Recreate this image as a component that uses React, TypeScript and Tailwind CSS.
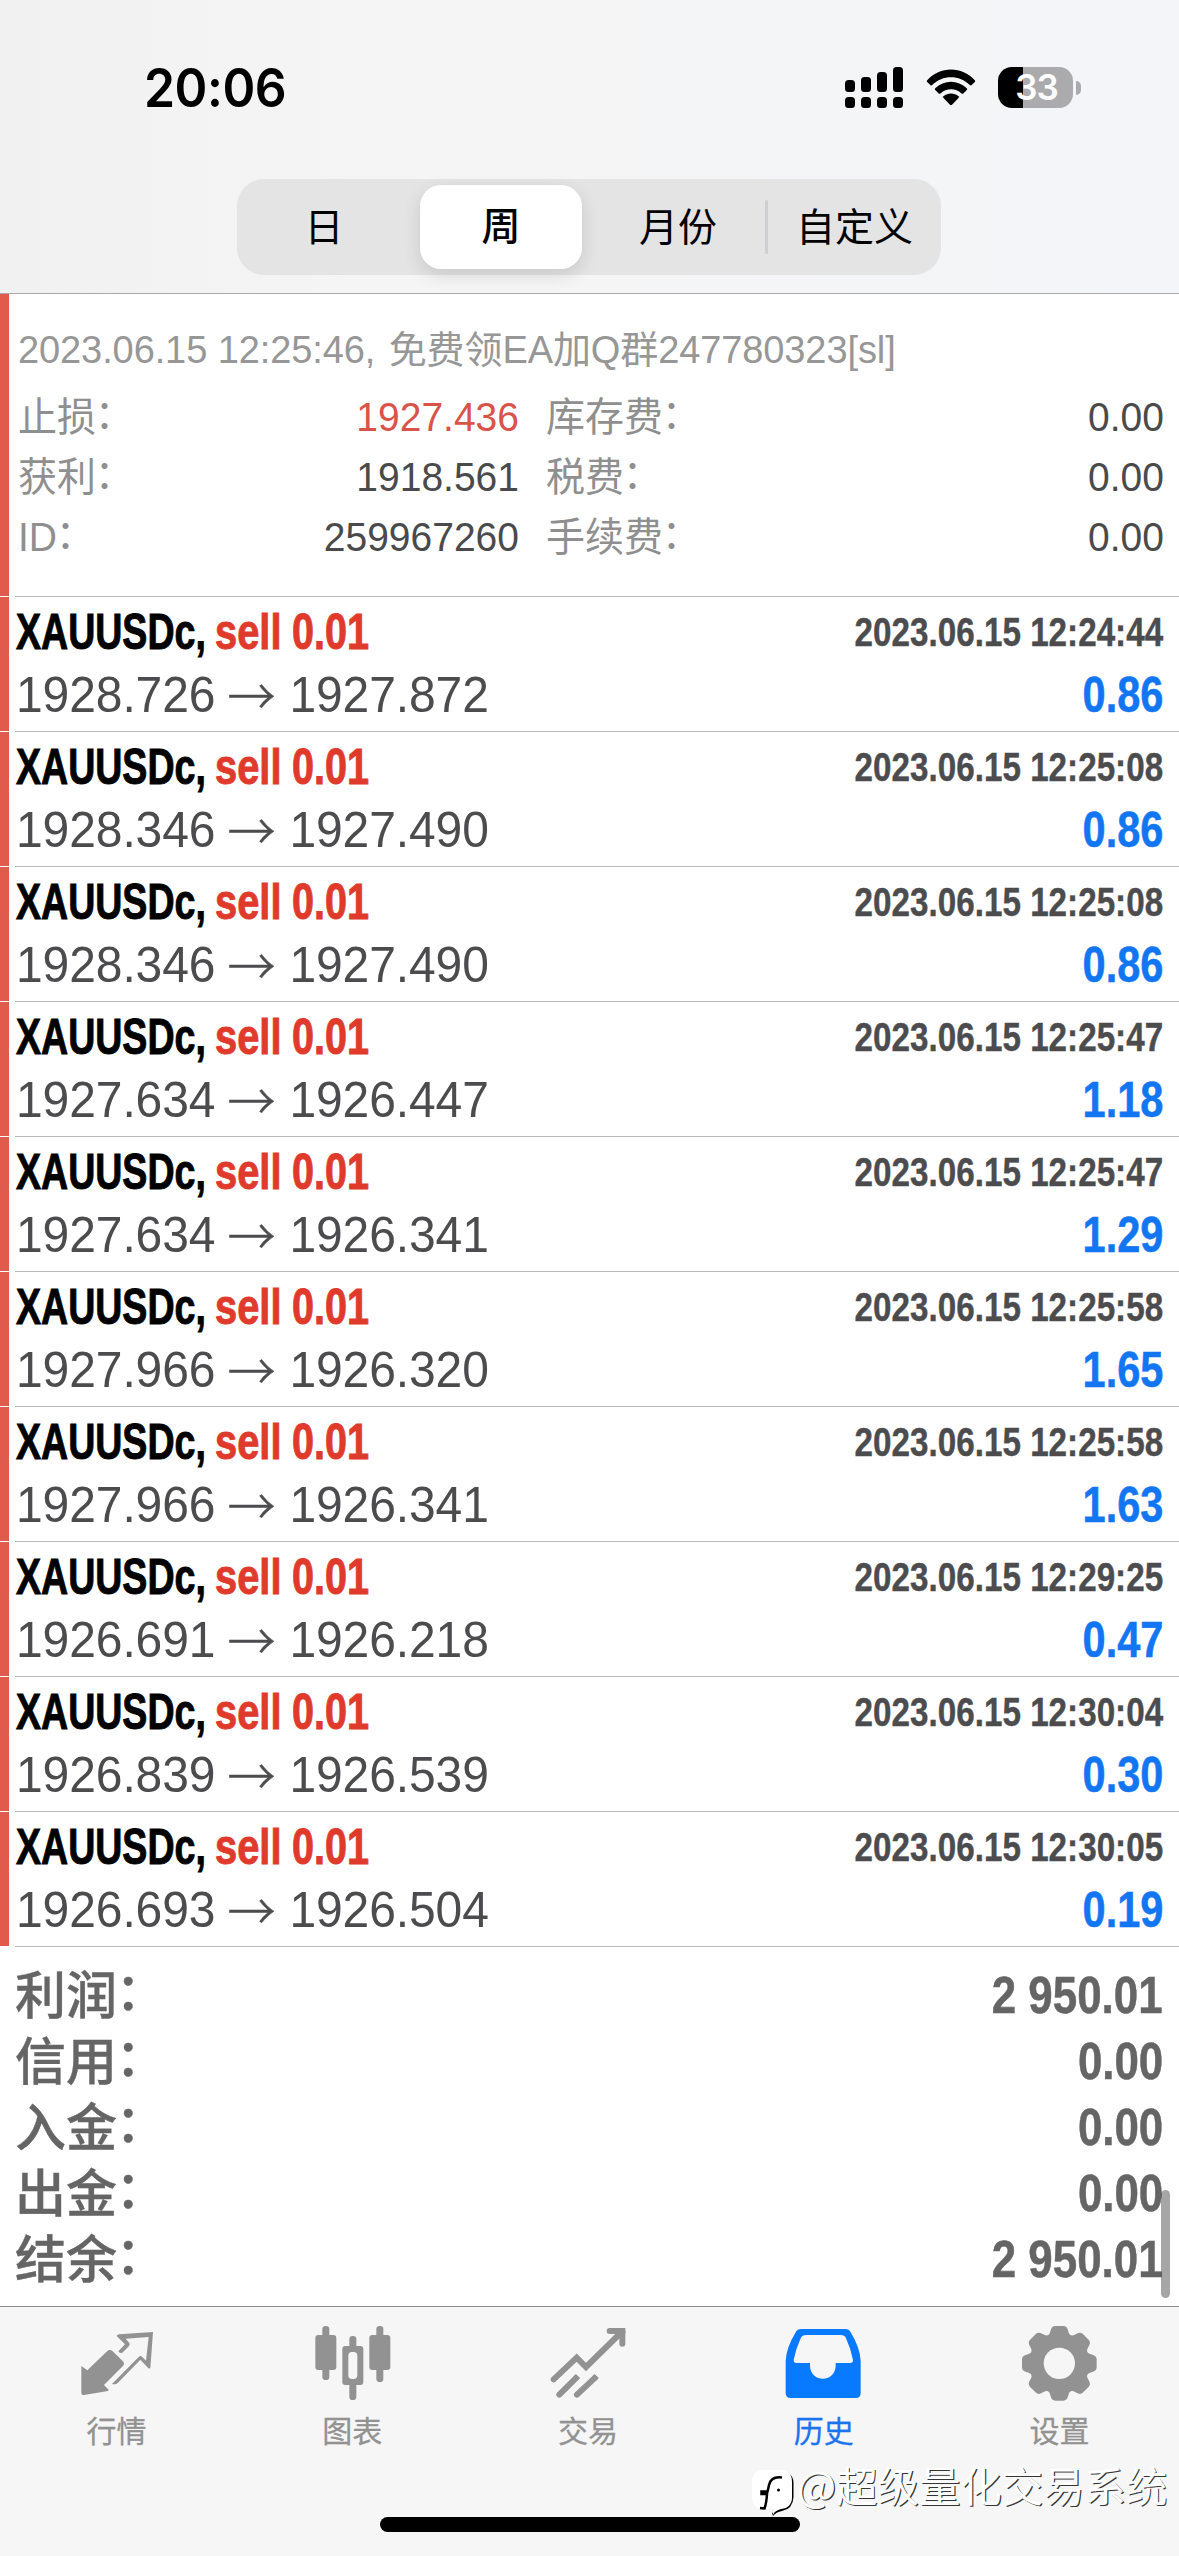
import type { ReactNode } from 'react'

type Deal = { time: string; open: string; close: string; profit: string }

const deals: Deal[] = [
  { time: '2023.06.15 12:24:44', open: '1928.726', close: '1927.872', profit: '0.86' },
  { time: '2023.06.15 12:25:08', open: '1928.346', close: '1927.490', profit: '0.86' },
  { time: '2023.06.15 12:25:08', open: '1928.346', close: '1927.490', profit: '0.86' },
  { time: '2023.06.15 12:25:47', open: '1927.634', close: '1926.447', profit: '1.18' },
  { time: '2023.06.15 12:25:47', open: '1927.634', close: '1926.341', profit: '1.29' },
  { time: '2023.06.15 12:25:58', open: '1927.966', close: '1926.320', profit: '1.65' },
  { time: '2023.06.15 12:25:58', open: '1927.966', close: '1926.341', profit: '1.63' },
  { time: '2023.06.15 12:29:25', open: '1926.691', close: '1926.218', profit: '0.47' },
  { time: '2023.06.15 12:30:04', open: '1926.839', close: '1926.539', profit: '0.30' },
  { time: '2023.06.15 12:30:05', open: '1926.693', close: '1926.504', profit: '0.19' },
]

const details = [
  { label: '止损', value: '1927.436', red: true, label2: '库存费', value2: '0.00' },
  { label: '获利', value: '1918.561', red: false, label2: '税费', value2: '0.00' },
  { label: 'ID', value: '259967260', red: false, label2: '手续费', value2: '0.00' },
]

const totals = [
  { label: '利润', value: '2 950.01' },
  { label: '信用', value: '0.00' },
  { label: '入金', value: '0.00' },
  { label: '出金', value: '0.00' },
  { label: '结余', value: '2 950.01' },
]

function StatusBar() {
  return (
    <div className="flex h-[179px] items-start justify-between pt-[60px] pr-[98px] pl-[144px]">
      <div className="origin-left scale-x-[0.94] [font-family:Inter,sans-serif] text-[53px] leading-[56px] font-semibold tracking-[-0.5px] text-black">20:06</div>
      <div className="flex h-[56px] items-start pt-[7px]">
        <svg width="59" height="42" viewBox="0 0 59 42" className="mr-[22px]">
          <rect x="0" y="13" width="10" height="12" rx="3.5" />
          <rect x="16" y="10" width="10" height="15" rx="3.5" />
          <rect x="32" y="5" width="10" height="20" rx="3.5" />
          <rect x="48" y="0" width="10" height="25" rx="3.5" />
          <rect x="0" y="30" width="10" height="11" rx="3.5" />
          <rect x="16" y="30" width="10" height="11" rx="3.5" />
          <rect x="32" y="30" width="10" height="11" rx="3.5" />
          <rect x="48" y="30" width="10" height="11" rx="3.5" />
        </svg>
        <svg width="50" height="42" viewBox="0 0 50 42" className="mr-[22px]">
          <path d="M1.2 13.2 C14 -1.2 36 -1.2 48.8 13.2 Q49.6 14 48.8 14.9 L45.4 18.2 Q44.6 18.9 43.8 18.1 C33.5 7.5 16.5 7.5 6.2 18.1 Q5.4 18.9 4.6 18.2 L1.2 14.9 Q.4 14 1.2 13.2Z" />
          <path d="M9.2 21.3 C18 12.4 32 12.4 40.8 21.3 Q41.6 22.2 40.8 23 L37.3 26.4 Q36.4 27.1 35.5 26.4 C29.5 20.8 20.5 20.8 14.5 26.4 Q13.6 27.1 12.7 26.4 L9.2 23 Q8.4 22.2 9.2 21.3Z" />
          <path d="M17.5 29.3 C21.8 25.7 28.2 25.7 32.5 29.3 Q33.3 30.2 32.5 31.1 L26 37.8 Q25 38.7 24 37.8 L17.5 31.1 Q16.7 30.2 17.5 29.3Z" />
        </svg>
        <div className="flex items-center">
          <div className="flex h-[41px] w-[75px] items-center justify-center rounded-[14px] bg-linear-to-r from-black from-[33%] to-[#ababad] to-[33%] pl-[2px] [font-family:Inter,sans-serif] text-[35px] leading-none font-semibold tracking-[-1px] text-white">33</div>
          <div className="ml-[3px] h-[14px] w-[5px] rounded-r-full bg-[#ababad]" />
        </div>
      </div>
    </div>
  )
}

function Segments() {
  return (
    <div className="mr-[238px] ml-[237px] grid h-[96px] grid-cols-4 items-center rounded-[27px] bg-[#e5e4e5] text-center text-[39px] leading-[84px] text-black">
      <div className="pt-px pr-[2px]">日</div>
      <div className="mx-[7px] rounded-[21px] bg-white font-medium shadow-[0_6px_18px_rgba(0,0,0,0.12)]">周</div>
      <div className="pt-px pl-[2px]">月份</div>
      <div className="flex items-center">
        <div className="h-[54px] w-[3px] rounded-full bg-[#cfcfd1]" />
        <div className="flex-1 pt-px">自定义</div>
      </div>
    </div>
  )
}

/* Label followed by a full-width colon that sits at mid-height of the characters. */
function Label({ children }: { children: string }) {
  return (
    <span>
      {children}
      <span className="inline-block -translate-x-[0.03em] -translate-y-[0.07em]">：</span>
    </span>
  )
}

/* Red marker on the left edge; rows are closed by an inset hairline. */
function MarkedRow({ children, className }: { children: ReactNode; className: string }) {
  return (
    <div className={`flex ${className}`}>
      <div className="mb-px w-[9px] bg-[#e05b4c]" />
      <div className="ml-[6px] flex-1 border-b border-[#b9babb] pr-[16px]">{children}</div>
    </div>
  )
}

function DealRow({ deal }: { deal: Deal }) {
  return (
    <MarkedRow className="h-[135px]">
      <div className="flex scale-y-[1.04] justify-between font-bold whitespace-nowrap">
        <div className="flex pl-px text-[48px] leading-[69px] [-webkit-text-stroke:0.9px_currentColor]">
          <span className="w-[199px] origin-left scale-x-[0.782] text-black">XAUUSDc,</span>
          <span className="w-[77px] origin-left scale-x-[0.83] text-[#e03a2d]">sell</span>
          <span className="origin-left scale-x-[0.825] text-[#e03a2d]">0.01</span>
        </div>
        <div className="origin-right scale-x-[0.852] text-[39px] leading-[69px] text-[#4c4c4f] [-webkit-text-stroke:0.4px_currentColor]">{deal.time}</div>
      </div>
      <div className="flex scale-y-[1.03] justify-between text-[48px] leading-[60px] whitespace-nowrap">
        <div className="flex pl-px text-[#4c4c4f]">
          <span className="tracking-[-0.1px]">{deal.open}</span>
          <span className="mx-[13px] w-[48px] -translate-x-px -translate-y-[3px] [font-family:'Noto_Sans_CJK_SC',sans-serif] font-light [-webkit-text-stroke:0.4px_currentColor]">→</span>
          <span className="tracking-[-0.1px]">{deal.close}</span>
        </div>
        <div className="origin-right scale-x-[0.865] font-bold text-[#1276f2] [-webkit-text-stroke:0.5px_currentColor]">{deal.profit}</div>
      </div>
    </MarkedRow>
  )
}

const tabIcons: Record<string, ReactNode> = {
  quotes: (
    <svg width="80" height="80" viewBox="234 96 240 240" fill="#929292">
      <path d="M244 228 L262 241 L322 183 Q330 176 338 184 L368 213 Q376 221 368 229 L312 285 L326 299 Q326 302 320 304 L252 315 Q244 315 244 308Z" />
      <path d="M350 138 Q352 134 358 133 L459 126 L451 234 Q448 238 444 233 L421 209 L354 278 Q347 285 336 282 L416 201 Q421 195 427 201 L438 212 L446 141 L377 146 L388 159 Q391 163 387 168 L367 188 Q359 192 355 184 L375 163Z" />
    </svg>
  ),
  chart: (
    <svg width="80" height="80" viewBox="941 96 240 240" fill="#929292">
      <rect x="945" y="135" width="63" height="105" rx="9" />
      <rect x="966" y="108" width="21" height="162" rx="10" />
      <rect x="1107" y="135" width="63" height="105" rx="9" />
      <rect x="1128" y="108" width="21" height="168" rx="10" />
      <rect x="1047" y="138" width="21" height="50" rx="10" />
      <rect x="1047" y="270" width="21" height="60" rx="10" />
      <rect x="1026" y="168" width="63" height="117" rx="9" />
      <rect x="1044" y="186" width="27" height="81" rx="11" fill="#f6f6f6" />
    </svg>
  ),
  trade: (
    <svg width="80" height="80" viewBox="148 96 240 240" fill="none" stroke="#929292" strokeWidth="18" strokeLinecap="round">
      <path d="M162 268 L231 203 L259 231 L366 126" />
      <path d="M330 123 H368 V161" />
      <path d="M366 126 L360 132" strokeWidth="22" />
      <path d="M179 314 L228 265 M232 314 L284 265" />
      <path d="M228 265 L235 258 M284 265 L291 258" strokeLinecap="butt" />
    </svg>
  ),
  history: (
    <svg width="80" height="80" viewBox="136 96 240 240">
      <path fill="#087aff" d="M184 117 H317 Q328 117 333 127 Q362 175 363 213 V309 Q363 324 348 324 H153 Q138 324 138 309 V213 Q139 175 168 127 Q173 117 184 117Z" />
      <path fill="#f6f6f6" d="M200 135 H303 Q315 135 319 145 Q334 178 340 210 Q340 219 332 219 H288 V228 C286 279 213 279 211 228 V219 H170 Q162 219 162 210 Q168 178 183 145 Q187 135 200 135Z" />
    </svg>
  ),
  settings: (
    <svg width="80" height="80" viewBox="843 96 240 240">
      <g fill="#929292" transform="translate(958 220)">
        <circle r="91" />
        {[0, 45, 90, 135, 180, 225, 270, 315].map((a) => (
          <path key={a} transform={`rotate(${a})`} d="M-40 -78 Q-29 -84 -26 -99 Q-23 -112 -12 -112 H12 Q23 -112 26 -99 Q29 -84 40 -78Z" />
        ))}
      </g>
      <circle cx="958" cy="220" r="47" fill="#f6f6f6" />
    </svg>
  ),
}

const tabs = [
  { icon: 'quotes', label: '行情' },
  { icon: 'chart', label: '图表' },
  { icon: 'trade', label: '交易' },
  { icon: 'history', label: '历史' },
  { icon: 'settings', label: '设置' },
]

export default function App() {
  return (
    <div className="relative flex h-[2556px] w-[1179px] flex-col overflow-hidden bg-white [font-family:'Liberation_Sans','Noto_Sans_CJK_SC',sans-serif]">
      <header className="h-[294px] border-b border-[#a9a9ab] bg-linear-to-r from-[#f2f1f1] via-[#f5f5f5] via-30% to-[#f4f5f8]">
        <StatusBar />
        <Segments />
      </header>

      <MarkedRow className="h-[303px]">
        <div className="pt-[26px] pl-[3px]">
          <div className="mb-[8px] text-[38px] leading-[60px] tracking-[-0.1px] whitespace-nowrap text-[#979797]">
            2023.06.15 12:25:46, <span className="ml-[3px]">免费领EA加Q群247780323[sl]</span>
          </div>
          {details.map((d) => (
            <div key={d.label} className="flex scale-y-[1.02] text-[39px] leading-[60px] text-[#4a4a4c]">
              <div className="flex w-[501px] justify-between">
                <span className="text-[#8f8f8f]"><Label>{d.label}</Label></span>
                <span className={d.red ? 'text-[#d9534a]' : ''}>{d.value}</span>
              </div>
              <div className="-mr-px ml-[27px] flex flex-1 justify-between">
                <span className="text-[#8f8f8f]"><Label>{d.label2}</Label></span>
                <span>{d.value2}</span>
              </div>
            </div>
          ))}
        </div>
      </MarkedRow>

      {deals.map((deal, i) => (
        <DealRow key={i} deal={deal} />
      ))}

      <section className="h-[359px] pt-[15px] pr-[16px] pl-[15px] text-[51px] leading-[66px] text-[#656565]">
        {totals.map((t) => (
          <div key={t.label} className="flex justify-between">
            <span className="translate-y-[2px] font-medium [-webkit-text-stroke:0.4px_currentColor]"><Label>{t.label}</Label></span>
            <span className="origin-right scale-x-[0.86] scale-y-[1.03] font-bold [-webkit-text-stroke:0.5px_currentColor]">{t.value}</span>
          </div>
        ))}
      </section>

      <nav className="grid flex-1 grid-cols-5 border-t border-[#8c8c8e] bg-[#f6f6f6] pt-[15px]">
        {tabs.map((t) => (
          <div key={t.icon} className={`flex flex-col items-center text-[30px] leading-[36px] ${t.icon === 'history' ? 'text-[#1a74ee]' : 'text-[#929292]'}`}>
            {tabIcons[t.icon]}
            <span className="mt-[12px] mr-[3px] [-webkit-text-stroke:0.3px_currentColor]">{t.label}</span>
          </div>
        ))}
      </nav>

      <div className="absolute top-[2190px] left-[1161px] h-[108px] w-[9px] rounded-full bg-black/35" />
      <div className="absolute top-[2517px] left-[380px] h-[15px] w-[420px] rounded-full bg-black" />
      <div className="absolute top-[2457px] left-[752px] flex items-start whitespace-nowrap">
        <svg width="44" height="58" viewBox="0 0 44 58" className="mt-[12px]">
          <path d="M36 4 Q41.500 7 41.500 14 V28 Q41 40 30 42 Q24 43 21 47 L20 44 L30 39 Q38 36 38 28Z" fill="#000" />
          <path d="M12 1 H28 Q40 1 40 13 V28 Q40 39 29 40 Q23 41 21 46 V40 H12 Q0 40 0 28 V13 Q0 1 12 1Z" fill="#fff" />
          <path d="M30 8.500 Q19 7 17 16 Q16 21 15.500 22.500 H9.500 V25 H15 Q14.500 34 12.500 39.500 L8 39" fill="none" stroke="#000" strokeWidth="2.500" />
          <circle cx="26.500" cy="21" r="1.500" fill="#000" />
        </svg>
        <span className="ml-px [font-family:'Noto_Sans_CJK_SC',sans-serif] text-[41.4px] leading-[54px] text-white [text-shadow:1.2px_1.2px_0.6px_rgba(0,0,0,0.8)]">@超级量化交易系统</span>
      </div>
    </div>
  )
}
